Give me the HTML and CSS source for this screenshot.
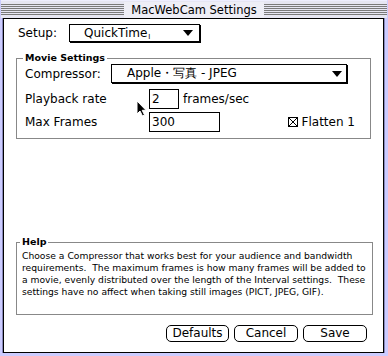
FILE: index.html
```html
<!DOCTYPE html>
<html lang="en">
<head>
    <meta charset="UTF-8">
    <title>MacWebCam Settings</title>
    <link rel="stylesheet" href="styles.css">
</head>
<body>
    <div class="window">
        <div class="titlebar">
            <span class="title">MacWebCam Settings</span>
        </div>

        <div class="content">
            <div class="setup-row">
                <span class="setup-label">Setup:</span>
                <div class="popup popup-setup">
                    <span>QuickTime<span class="tm">I</span></span>
                    <span class="arrow"></span>
                </div>
            </div>

            <fieldset class="group movie">
                <legend>Movie Settings</legend>
                <div class="row">
                    <span class="label label-short">Compressor:</span>
                    <div class="popup popup-comp">
                        <span>Apple・写真 - JPEG</span>
                        <span class="arrow"></span>
                    </div>
                </div>
                <div class="row row-rate">
                    <span class="label">Playback rate</span>
                    <span class="field field-rate">2</span>
                    <span class="unit">frames/sec</span>
                </div>
                <div class="row row-max">
                    <span class="label">Max Frames</span>
                    <span class="field field-max">300</span>
                    <label class="check">
                        <svg class="check-box" width="10" height="10" viewBox="0 0 10 10">
                            <rect x="0.5" y="0.5" width="9" height="9" fill="#fff" stroke="#000"/>
                            <path d="M1 1L9 9M9 1L1 9" stroke="#000" stroke-width="1"/>
                        </svg>
                        Flatten 1
                    </label>
                </div>
            </fieldset>

            <div class="spacer"></div>

            <fieldset class="group help">
                <legend>Help</legend>
                <p>Choose a Compressor that works best for your audience and bandwidth<br>
                requirements.&nbsp; The maximum frames is how many frames will be added to<br>
                a movie, evenly distributed over the length of the Interval settings.&nbsp; These<br>
                settings have no affect when taking still images (PICT, JPEG, GIF).</p>
            </fieldset>

            <div class="buttons">
                <button class="btn btn-defaults">Defaults</button>
                <button class="btn">Cancel</button>
                <button class="btn">Save</button>
            </div>
        </div>

        <!-- mouse pointer sitting over the dialog -->
        <svg class="cursor" width="12" height="18" viewBox="0 0 12 18">
            <path d="M1 1L1 14L4 11L6.5 16L8.5 15L6.2 10.3L10 10.3Z" fill="#000" stroke="#fff" stroke-width="1" stroke-linejoin="miter"/>
        </svg>
    </div>
</body>
</html>
```

FILE: styles.css
```css
body {
    margin: 0;
    padding: 0;
    background-color: #ccccff;
    font-family: "DejaVu Sans", sans-serif;
    color: #000;
}
.window {
    position: relative;
    width: 388px;
    height: 356px;
    box-sizing: border-box;
    padding: 0 4px 3px 3px;
    display: flex;
    flex-direction: column;
    background-color: #ccccff;
}
.titlebar {
    height: 18px;
    margin: 0 -3px 0 -2px;
    display: flex;
    justify-content: center;
    align-items: center;
    background: repeating-linear-gradient(
        to bottom,
        #e6e6f2 0px, #e6e6f2 1px,
        #7a7a7a 1px, #7a7a7a 2px
    );
    background-size: 100% 12px;
    background-position: 0 2px;
    background-repeat: no-repeat;
    background-color: #e6e6f2;
    border-top: 1px solid #eeeeff;
    box-sizing: border-box;
}
.title {
    background-color: #eeeef6;
    padding: 0 7px;
    font-size: 11.5px;
    line-height: 16px;
}
.content {
    flex: 1;
    display: flex;
    flex-direction: column;
    background-color: #fff;
    border: 1px solid #000;
    box-shadow: -1px 0 0 #8888bb, 1px 0 0 #8888bb;
    padding: 5px 12px 10px 12px;
}
.setup-row {
    display: flex;
    align-items: center;
    padding-left: 2px;
    height: 18px;
}
.setup-label {
    font-size: 12px;
    width: 51px;
}
.popup {
    box-sizing: border-box;
    display: flex;
    align-items: center;
    justify-content: space-between;
    border: 1px solid #000;
    box-shadow: 1px 1px 0 #000;
    font-size: 12px;
    background-color: #fff;
}
.popup-setup {
    width: 131px;
    height: 18px;
    padding: 0 3px 0 14px;
}
.tm {
    font-size: 7px;
    vertical-align: -2px;
    margin-left: 1px;
}
.arrow {
    width: 0;
    height: 0;
    border-left: 5px solid transparent;
    border-right: 5px solid transparent;
    border-top: 6px solid #000;
    margin-right: 3px;
}
.group {
    margin: 10px 0 0 0;
    border: 1px solid #888;
    padding: 0 8px 6px 8px;
}
.group legend {
    font-weight: bold;
    font-size: 9.5px;
    line-height: 12px;
    padding: 0 2px;
    margin-left: -2px;
}
.row {
    display: flex;
    align-items: center;
}
.row-rate {
    margin-top: 6px;
}
.row-max {
    margin-top: 3px;
}
.label {
    font-size: 12px;
    width: 124px;
}
.label-short {
    width: 86px;
}
.popup-comp {
    width: 236px;
    height: 19px;
    padding: 0 1px 0 15px;
}
.field {
    box-sizing: border-box;
    border: 1px solid #000;
    height: 20px;
    font-size: 12px;
    line-height: 18px;
    padding-left: 2px;
}
.field-rate {
    width: 30px;
}
.field-max {
    width: 71px;
}
.unit {
    font-size: 12px;
    margin-left: 4px;
}
.check {
    margin-left: auto;
    margin-right: 7px;
    display: flex;
    align-items: center;
    font-size: 12px;
}
.check-box {
    margin-right: 4px;
}
.spacer {
    flex: 1;
}
.help {
    padding: 2px 6px 16px 5px;
}
.help p {
    margin: 0;
    font-size: 9.2px;
    line-height: 12px;
    white-space: nowrap;
}
.buttons {
    display: flex;
    justify-content: flex-end;
    gap: 5px;
    margin-top: 10px;
    padding-right: 4px;
}
.btn {
    box-sizing: border-box;
    height: 17px;
    width: 64px;
    border: 1px solid #000;
    border-radius: 5px;
    background-color: #fff;
    font-family: "DejaVu Sans", sans-serif;
    font-size: 12px;
    padding: 0;
    line-height: 15px;
    color: #000;
}
.btn-defaults {
    width: 63px;
}
.cursor {
    position: absolute;
    left: 136px;
    top: 100px;
}
```
